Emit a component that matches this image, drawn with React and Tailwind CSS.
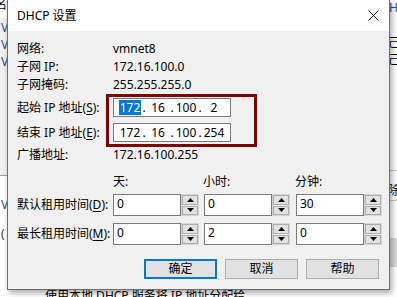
import React from 'react';

const font = { fontFamily: '"Noto Sans", "Noto Sans CJK SC", sans-serif' };

const Ul = ({ children }) => <span className="underline underline-offset-2">{children}</span>;

const IpField = ({ parts, selectFirst }) => (
  <div className="w-[118px] h-[19px] bg-white border border-[#7a7a7a] flex items-center pl-[6px] text-[12px] text-black">
    {parts.map((p, i) => (
      <React.Fragment key={i}>
        {i > 0 && <span className="w-[8px] text-center">.</span>}
        <span className="w-[20px] flex justify-center">
          <span className={i === 0 && selectFirst ? 'bg-[#0078d7] text-white px-[1px] leading-[15px]' : 'leading-[15px]'}>{p}</span>
        </span>
      </React.Fragment>
    ))}
  </div>
);

const Arrow = ({ up }) => (
  <svg width="7" height="4" viewBox="0 0 7 4">
    <polygon points={up ? '3.5,0 7,4 0,4' : '0,0 7,0 3.5,4'} fill="#000" />
  </svg>
);

const Spin = ({ value, className = '' }) => (
  <div className={`flex shrink-0 ${className}`}>
    <div className="w-[68px] h-[22px] bg-white border border-[#7a7a7a] pl-[3px] pt-[1px] text-[12px] leading-[16px] text-black">
      {value}
    </div>
    <div className="w-[18px] h-[22px] flex flex-col gap-[1px] border border-[#d4d4d4] bg-[#f0f0f0]">
      <div className="flex-1 bg-[#e1e1e1] border border-[#adadad] flex items-center justify-center"><Arrow up /></div>
      <div className="flex-1 bg-[#e1e1e1] border border-[#adadad] flex items-center justify-center"><Arrow /></div>
    </div>
  </div>
);

const Btn = ({ children, primary }) => (
  <button
    className={`w-[73px] h-[20px] bg-[#e1e1e1] text-[12px] text-black flex items-center justify-center ${
      primary ? 'border-2 border-[#0078d7]' : 'border border-[#adadad]'
    }`}
  >
    {children}
  </button>
);

const Label = ({ children, w = 'w-[96px]' }) => (
  <span className={`${w} shrink-0 whitespace-nowrap`}>{children}</span>
);

export default function App() {
  return (
    <div className="relative w-[397px] h-[297px] overflow-hidden bg-white text-black" style={font}>
      {/* window behind the dialog */}
      <div className="absolute left-0 top-[18px] w-[8px] h-[157px] bg-[#f0f0f0]" />
      <div className="absolute left-0 top-[175px] w-[8px] h-[1px] bg-[#a0a0a0]" />
      <div className="absolute left-[-5px] top-[-4px] text-[12px]">名</div>
      <div className="absolute left-[1px] top-[19px] text-[12px] text-[#1a4fa0]">V</div>
      <div className="absolute left-[1px] top-[36px] text-[12px] text-[#1a4fa0]">V</div>
      <div className="absolute left-[1px] top-[53px] text-[12px] text-[#1a4fa0]">V</div>
      <div className="absolute left-[1px] top-[196px] text-[12px] text-[#1a4fa0]">V</div>
      <div className="absolute left-[1px] top-[225px] text-[12px] text-[#333]">(</div>

      <div className="absolute left-[389px] top-[-1px] text-[12px] text-[#1a4fa0]">Hc</div>
      <div className="absolute left-[388px] top-[34px] text-[12px]">己/</div>
      <div className="absolute left-[388px] top-[51px] text-[12px]">己/</div>
      <div className="absolute left-[389px] top-[170px] w-[8px] h-[1px] bg-[#c8c8c8]" />
      <div className="absolute left-[388px] top-[182px] text-[12px]">除</div>
      <div className="absolute left-[389px] top-[200px] w-[8px] h-[1px] bg-[#c8c8c8]" />
      <div className="absolute left-[389px] top-[238px] w-[8px] h-[29px] bg-[#d9d9d9]" />
      <div className="absolute left-[45px] top-[287px] text-[12px] whitespace-nowrap">使用本地 DHCP 服务将 IP 地址分配给</div>

      {/* dialog */}
      <div className="absolute left-[7px] top-[-1px] w-[383px] h-[291px] flex flex-col border border-[#6e6e6e] bg-[#f0f0f0] shadow-[2px_3px_6px_rgba(0,0,0,0.35)]">
        <div className="h-[31px] bg-white flex items-center justify-between pl-[9px] pr-[10px] text-[12px]">
          <span>DHCP 设置</span>
          <svg width="11" height="11" viewBox="0 0 11 11">
            <path d="M0.5 0.5 L10.5 10.5 M10.5 0.5 L0.5 10.5" stroke="#000" strokeWidth="1" />
          </svg>
        </div>

        <div className="flex-1 flex flex-col pl-[9px] pr-[10px] pt-[9px] text-[12px]">
          <div className="flex h-[18px] items-center">
            <Label>网络:</Label>
            <span>vmnet8</span>
          </div>
          <div className="flex h-[18px] items-center">
            <Label>子网 IP:</Label>
            <span>172.16.100.0</span>
          </div>
          <div className="flex h-[18px] items-center">
            <Label>子网掩码:</Label>
            <span>255.255.255.0</span>
          </div>

          <div className="flex">
            <div className="w-[89px] shrink-0 flex flex-col pt-[4px] gap-[6px] whitespace-nowrap">
              <span className="h-[19px] flex items-center">起始 IP 地址(<Ul>S</Ul>):</span>
              <span className="h-[19px] flex items-center">结束 IP 地址(<Ul>E</Ul>):</span>
            </div>
            <div className="w-[151px] h-[53px] border-[3px] border-[#800000] pl-[4px] pt-[1px] flex flex-col gap-[6px]">
              <IpField parts={['172', '16', '100', '2']} selectFirst />
              <IpField parts={['172', '16', '100', '254']} />
            </div>
          </div>

          <div className="flex h-[16px] items-center">
            <Label>广播地址:</Label>
            <span>172.16.100.255</span>
          </div>

          <div className="flex h-[18px] items-center mt-[10px] pl-[96px]">
            <span className="w-[90px]">天:</span>
            <span className="w-[92px]">小时:</span>
            <span>分钟:</span>
          </div>

          <div className="flex items-center mt-[3px]">
            <Label>默认租用时间(<Ul>D</Ul>):</Label>
            <Spin value="0" />
            <Spin value="0" className="ml-[5px]" />
            <Spin value="30" className="ml-[6px]" />
          </div>
          <div className="flex items-center mt-[7px]">
            <Label>最长租用时间(<Ul>M</Ul>):</Label>
            <Spin value="0" />
            <Spin value="2" className="ml-[5px]" />
            <Spin value="0" className="ml-[6px]" />
          </div>

          <div className="flex justify-end gap-[8px] mt-[14px]">
            <Btn primary>确定</Btn>
            <Btn>取消</Btn>
            <Btn>帮助</Btn>
          </div>
        </div>
      </div>
    </div>
  );
}
